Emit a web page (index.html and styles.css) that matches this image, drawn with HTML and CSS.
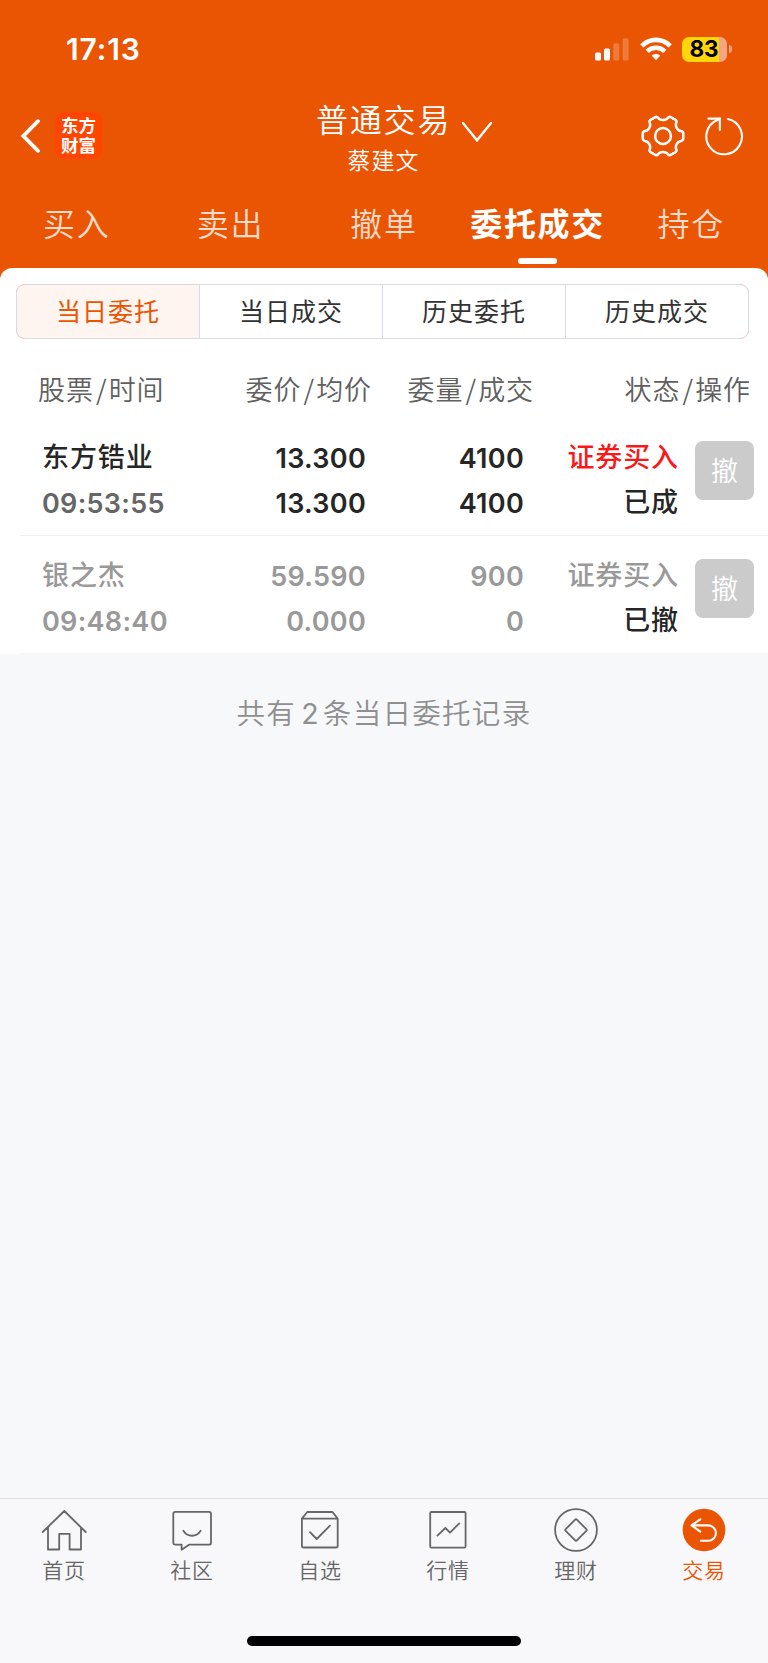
FILE: index.html
```html
<!DOCTYPE html>
<html lang="zh-CN">
<head>
<meta charset="utf-8">
<title>普通交易</title>
<link rel="stylesheet" href="styles.css">
</head>
<body>
<div class="app">
  <header class="top">
    <div class="status">
      <span class="clock">17:13</span>
      <div class="status-icons">
        <svg class="signal" width="36" height="24" viewBox="0 0 36 24" fill="#fff">
          <rect x="1" y="15.5" width="6" height="8" rx="1.6"/>
          <rect x="10" y="11.5" width="6" height="12" rx="1.6"/>
          <rect x="19.3" y="6.5" width="6" height="17" rx="1.6" opacity=".22"/>
          <rect x="28.6" y="1.3" width="6" height="22.2" rx="1.6" opacity=".22"/>
        </svg>
        <svg class="wifi" width="32" height="24" viewBox="0 0 32 24" fill="none" stroke="#fff" stroke-width="4.6">
          <path d="M1.8 8.8C9.8.9 22.2.9 30.2 8.8"/>
          <path d="M7.1 14.4C12.2 9.6 19.8 9.6 24.9 14.4"/>
          <path d="M11.6 18.6C14.2 16.3 17.8 16.3 20.4 18.6L16 23.2Z" fill="#fff" stroke="none"/>
        </svg>
        <div class="battery"><span class="level">83</span></div><i class="nub"></i>
      </div>
    </div>
    <div class="nav">
      <div class="nav-side">
        <svg class="back" width="20" height="36" viewBox="0 0 20 36" fill="none" stroke="#fff" stroke-width="3.8" stroke-linecap="round" stroke-linejoin="miter"><path d="M18 3.2L3.4 18L18 32.8"/></svg>
        <div class="logo">东方<br>财富</div>
      </div>
      <div class="heading">
        <div class="titles"><h1>普通交易</h1><p>蔡建文</p></div>
        <svg class="caret" width="32" height="22" viewBox="0 0 32 22" fill="none" stroke="#fff" stroke-width="2.3" stroke-linecap="round"><path d="M2 2L16 19.3L30 2"/></svg>
      </div>
      <div class="nav-side actions">
        <svg width="46" height="46" viewBox="-23 -23 46 46" fill="none" stroke="#fff" stroke-width="2.5" stroke-linecap="round">
          <circle r="7.9"/>
          <g id="tooth"><path d="M10.1 -17.5L8.1 -18.7Q6.2 -19.8 4.8 -18.1C3 -15.2 -3 -15.2 -4.8 -18.1Q-6.2 -19.8 -8.1 -18.7L-10.1 -17.5"/></g>
          <use href="#tooth" transform="rotate(60)"/><use href="#tooth" transform="rotate(120)"/><use href="#tooth" transform="rotate(180)"/><use href="#tooth" transform="rotate(240)"/><use href="#tooth" transform="rotate(300)"/>
        </svg>
        <svg width="42" height="42" viewBox="0 0 42 42" fill="none" stroke="#fff" stroke-width="2.1" stroke-linecap="round"><path d="M25 4.1A17.8 17.8 0 1 1 14.4 5L16.8 3.8"/><path d="M5.4 3.6H16.8V15"/></svg>
      </div>
    </div>
    <nav class="tabs">
      <a>买入</a><a>卖出</a><a>撤单</a><a class="on">委托成交</a><a>持仓</a>
    </nav>
  </header>
  <main class="sheet">
    <div class="segments">
      <span class="seg active">当日委托</span><span class="seg">当日成交</span><span class="seg">历史委托</span><span class="seg">历史成交</span>
    </div>
    <div class="cols"><span>股票<i>/</i>时间</span><span>委价<i>/</i>均价</span><span>委量<i>/</i>成交</span><span>状态<i>/</i>操作</span></div>
    <section class="order">
      <div class="cell name"><b>东方锆业</b><span class="num time">09:53:55</span></div>
      <div class="cell num"><span>13.300</span><span>13.300</span></div>
      <div class="cell num"><span>4100</span><span>4100</span></div>
      <div class="cell state"><b class="buy">证券买入</b><b>已成</b></div>
      <button class="cancel">撤</button>
    </section>
    <section class="order done">
      <div class="cell name"><b>银之杰</b><span class="num time">09:48:40</span></div>
      <div class="cell num"><span>59.590</span><span>0.000</span></div>
      <div class="cell num"><span>900</span><span>0</span></div>
      <div class="cell state"><b class="buy">证券买入</b><b class="result">已撤</b></div>
      <button class="cancel">撤</button>
    </section>
  </main>
  <p class="summary">共有<span class="count">2</span>条当日委托记录</p>
  <footer class="bar">
    <div class="items">
      <a><svg viewBox="0 0 48 48"><path d="M2.7 26L24.3 5L45.7 26M8 21.5V43.5H19.2V27.8H29.6V43.5H41V21.5"/></svg>首页</a>
      <a><svg viewBox="0 0 48 48"><path d="M7.3 5.8H41Q43 5.8 43 7.8V36.7Q43 38.7 41 38.7H21L13.6 43.8V38.7H7.3Q5.3 38.7 5.3 36.7V7.8Q5.3 5.8 7.3 5.8ZM15.4 24.8C19.4 31.4 28.6 31.4 32.6 24.8"/></svg>社区</a>
      <a><svg viewBox="0 0 48 48"><path d="M5.9 12.6L11.3 6H36.5L41.7 12.6V39.7Q41.7 41.5 39.9 41.5H7.7Q5.9 41.5 5.9 39.7ZM5.9 12.6H41.7M14 26.2L20.7 33L34 19.7"/></svg>自选</a>
      <a><svg viewBox="0 0 48 48"><rect x="6.2" y="6" width="35.4" height="35.6" rx="1.2"/><path d="M13.4 29.6L21.4 22L26 26.6L35.3 17.4"/></svg>行情</a>
      <a><svg viewBox="0 0 48 48"><circle cx="24" cy="24" r="20.9"/><rect x="16.1" y="16.1" width="15.8" height="15.8" rx="1.2" transform="rotate(45 24 24)"/></svg>理财</a>
      <a class="on"><svg viewBox="0 0 48 48"><circle cx="24" cy="24" r="20.4"/><path d="M20.3 13.4L11.5 19.4L20.3 25.6M11.5 19.4H28.3A7.65 7.65 0 0 1 28.3 34.7H20.8"/></svg>交易</a>
    </div>
    <div class="home"></div>
  </footer>
</div>
</body>
</html>
```
FILE: styles.css
```css
* { box-sizing: border-box; margin: 0; padding: 0; }
body { background: #f7f8fa; font-family: "Noto Sans CJK SC", sans-serif; color: #262626; }
svg { display: block; flex: none; }
i { font-style: normal; }
.app { width: 768px; height: 1663px; display: flex; flex-direction: column; overflow: hidden; background: #f7f8fa; }
.top { background: #ea5504; height: 280px; flex: none; color: #fff; }
.status { height: 98px; padding: 0 36.5px 0 66px; display: flex; justify-content: space-between; align-items: center; }
.clock { font: 600 30px/36px Inter, sans-serif; letter-spacing: .9px; }
.status-icons { display: flex; align-items: center; }
.wifi { margin-left: 10px; }
.battery { margin-left: 10px; width: 45px; height: 25px; border-radius: 7px; background: linear-gradient(90deg, #ffd60a 37px, #f4a680 37px); text-align: center; color: #000; }
.level { display: block; font: 700 22.5px/24px Inter, sans-serif; padding-right: 1px; }
.nub { width: 3px; height: 8px; margin-left: 1.5px; background: #f2a27c; border-radius: 0 3px 3px 0; }
.nav { height: 88px; display: grid; grid-template-columns: 200px 1fr 200px; }
.nav-side { display: flex; align-items: center; padding: 0 0 13px 20px; }
.logo { margin-left: 15px; width: 47px; height: 47px; border-radius: 9px; background: #ff4500; text-align: center; padding-top: 3px; font-weight: 700; font-size: 17.5px; line-height: 19.6px; }
.heading { display: flex; padding-left: 116px; }
.titles { text-align: center; flex: none; }
h1 { font-weight: 350; font-size: 32px; line-height: 40px; letter-spacing: 1.8px; }
.titles p { font-weight: 350; font-size: 23px; line-height: 30px; letter-spacing: 1px; margin-top: 6px; }
.caret { margin: 23px 0 0 10px; }
.actions { padding: 0 23px 13px 0; justify-content: flex-end; gap: 17px; }
.tabs { display: grid; grid-template-columns: repeat(5, 1fr); height: 82px; }
.tabs a { display: flex; flex-direction: column; align-items: center; font-size: 32px; line-height: 40px; padding-top: 16px; letter-spacing: 1.7px; font-weight: 350; color: #fddccb; white-space: nowrap; }
.tabs .on { font-weight: 700; color: #fff; }
.tabs .on::after { content: ""; width: 39px; height: 6px; border-radius: 3px; background: #fff; margin-top: 16px; }
.sheet { background: #fff; border-radius: 12px 12px 0 0; margin-top: -12px; height: 386px; flex: none; padding-top: 16px; }
.segments { display: grid; grid-template-columns: 183px 183px 183px 184px; margin: 0 19px 0 16px; height: 55px; padding: 1px 0; border-radius: 9px; overflow: hidden; background: linear-gradient(90deg, #eba581 8px, #d9dbe4 8px, #d9dbe4 725px, #eba581 725px); }
.seg { text-align: center; font-size: 25px; line-height: 51px; letter-spacing: 1px; color: #333; background: #fff; border-left: 1px solid #d9dbe4; }
.seg:first-child { border-radius: 8px 0 0 8px; }
.seg:last-child { border-right: 1px solid #d9dbe4; border-radius: 0 8px 8px 0; }
.seg.active { background: #fef4f0; color: #ea5504; }
.cols { display: grid; grid-template-columns: 150px 184px 162px 217px; height: 79px; padding: 30px 17px 0 38px; font-size: 27px; line-height: 40px; letter-spacing: .9px; font-weight: 350; color: #606060; text-align: right; }
.cols span:first-child { text-align: left; }
.cols i { margin: 0 1.2px 0 2.2px; }
.order { display: grid; grid-template-columns: 180px 144px 158px 154px 59px; height: 118px; margin-left: 20px; padding: 17.5px 14px 0 22px; border-bottom: 1px solid #f0f0f2; }
.order:last-child { border-bottom-color: #f7f8fa; }
.cell { display: flex; flex-direction: column; align-items: flex-end; font-size: 27px; line-height: 45.3px; white-space: nowrap; }
.name { align-items: flex-start; }
.cell b { font-weight: 500; letter-spacing: .9px; margin-right: -1px; position: relative; top: -2.5px; }
.num { font-family: Inter, sans-serif; font-weight: 600; letter-spacing: .3px; }
.time { color: #666; }
.state .buy { color: #fa1919; }
.cancel { width: 59px; height: 59px; margin-top: 5.5px; margin-left: 17px; border: 0; border-radius: 8px; background: #cbcbcb; color: #fff; font: 350 27px/51px "Noto Sans CJK SC", sans-serif; padding-bottom: 2px; }
.done .cell, .done .time, .done .buy { color: #999; }
.done .result { color: #262626; }
.summary { text-align: center; font-size: 28.5px; line-height: 40px; letter-spacing: 1.3px; font-weight: 350; color: #8f8f8f; margin-top: 38px; }
.count { margin: 0 3px 0 5px; font-family: Inter, sans-serif; font-weight: 400; }
.bar { margin-top: auto; height: 165px; flex: none; border-top: 1px solid #dedfe2; background: #f8f8fb; }
.items { display: grid; grid-template-columns: repeat(6, 1fr); height: 137px; padding-top: 7px; }
.items a { display: flex; flex-direction: column; align-items: center; font-size: 21px; line-height: 31px; letter-spacing: .8px; color: #666; font-weight: 350; }
.items svg { width: 48px; height: 48px; fill: none; stroke: #666; stroke-width: 1.8; stroke-linecap: round; stroke-linejoin: round; }
.items .on { color: #ea5504; }
.items .on circle { fill: #ea5504; stroke: #ea5504; }
.items .on path { stroke: #fff; stroke-width: 2.1; }
.home { width: 274px; height: 10px; border-radius: 5px; background: #000; margin: 0 auto; }
```
